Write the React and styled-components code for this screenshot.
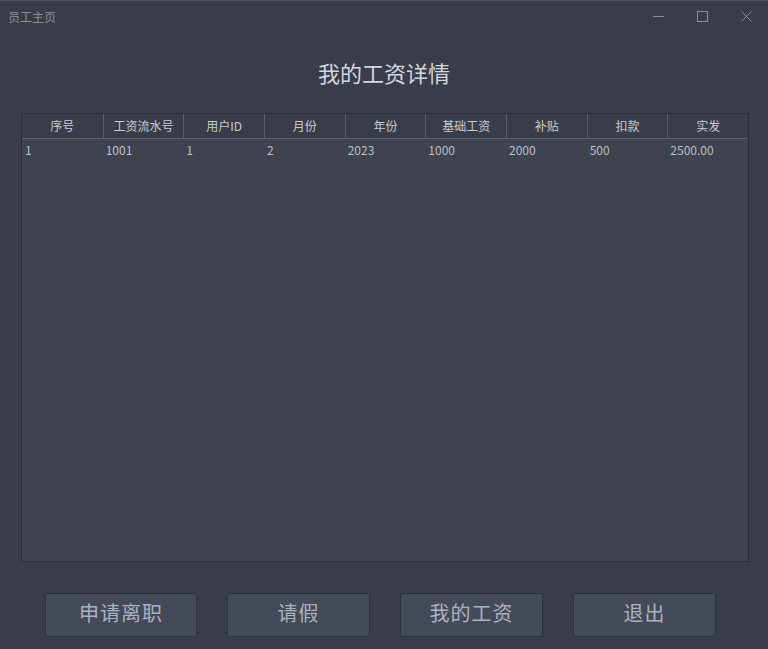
import React from "react";
import styled, { createGlobalStyle } from "styled-components";

const Global = createGlobalStyle`
  html, body { margin: 0; padding: 0; background: #393c4a; }
  body { font-family: "Noto Sans CJK SC", "Noto Sans", sans-serif; }
  * { box-sizing: border-box; }
`;

const Window = styled.div`
  width: 768px;
  height: 649px;
  background: #393c4a;
  border-top: 1px solid #4b4e59;
  display: flex;
  flex-direction: column;
  overflow: hidden;
`;

const TitleBar = styled.div`
  height: 31px;
  display: flex;
  align-items: center;
  justify-content: space-between;
`;

const TitleText = styled.div`
  padding-left: 8px;
  font-size: 12px;
  color: #8d8f96;
  line-height: 16px;
`;

const Controls = styled.div`
  display: flex;
  height: 100%;
`;

const Ctrl = styled.div`
  width: 44px;
  height: 100%;
  display: flex;
  align-items: center;
  justify-content: center;
  padding-bottom: 1px;
`;

const Heading = styled.h1`
  margin: 0;
  height: 81px;
  padding-top: 27px;
  font-size: 22px;
  line-height: 26px;
  font-weight: normal;
  text-align: center;
  color: #d2d6de;
`;

const TableBox = styled.div`
  margin: 0 19px 0 21px;
  height: 449px;
  border: 1px solid #2b2e39;
  background: #3f4350;
  display: flex;
  flex-direction: column;
`;

const Row = styled.div`
  display: grid;
  grid-template-columns: repeat(9, 1fr);
  height: ${(p) => p.$h}px;
  background: ${(p) => (p.$head ? "#393c49" : "transparent")};
  border-bottom: ${(p) => (p.$head ? "1px solid #5d616b" : "none")};
`;

const HeadCell = styled.div`
  font-size: 12px;
  color: #c9ccd2;
  display: flex;
  align-items: center;
  justify-content: center;
  padding-bottom: 1px;
  border-left: ${(p) => (p.$first ? "none" : "1px solid #5a5e69")};
`;

const Cell = styled.div`
  font-size: 12px;
  color: #b9c0cb;
  display: flex;
  align-items: center;
  padding-left: 3px;
`;

const ButtonRow = styled.div`
  display: flex;
  padding: 31px 0 0 45px;
  gap: 30px;
`;

const Btn = styled.button`
  width: ${(p) => p.$w}px;
  height: 44px;
  background: #454a58;
  border: 1px solid #2e3140;
  border-radius: 2px;
  color: #a9b2c2;
  font-family: "Noto Sans CJK SC", "Noto Sans", sans-serif;
  font-size: 20px;
  line-height: 24px;
  letter-spacing: 1px;
  padding: 0 0 5px 0;
  cursor: pointer;
`;

const headers = ["序号", "工资流水号", "用户ID", "月份", "年份", "基础工资", "补贴", "扣款", "实发"];
const rows = [["1", "1001", "1", "2", "2023", "1000", "2000", "500", "2500.00"]];

export default function App() {
  return (
    <>
      <Global />
      <Window>
        <TitleBar>
          <TitleText>员工主页</TitleText>
          <Controls>
            <Ctrl>
              <svg width="11" height="11" viewBox="0 0 11 11">
                <line x1="0" y1="5.5" x2="11" y2="5.5" stroke="#8d8f96" strokeWidth="1" />
              </svg>
            </Ctrl>
            <Ctrl>
              <svg width="11" height="11" viewBox="0 0 11 11">
                <rect x="0.5" y="0.5" width="10" height="10" fill="none" stroke="#8d8f96" strokeWidth="1" />
              </svg>
            </Ctrl>
            <Ctrl>
              <svg width="11" height="11" viewBox="0 0 11 11">
                <path d="M0.5 0.5 L10.5 10.5 M10.5 0.5 L0.5 10.5" stroke="#8d8f96" strokeWidth="1" />
              </svg>
            </Ctrl>
          </Controls>
        </TitleBar>
        <Heading>我的工资详情</Heading>
        <TableBox>
          <Row $head $h={25}>
            {headers.map((h, i) => (
              <HeadCell key={h} $first={i === 0}>{h}</HeadCell>
            ))}
          </Row>
          {rows.map((r, i) => (
            <Row key={i} $h={20}>
              {r.map((c, j) => (
                <Cell key={j}>{c}</Cell>
              ))}
            </Row>
          ))}
        </TableBox>
        <ButtonRow>
          <Btn $w={152}>申请离职</Btn>
          <Btn $w={143}>请假</Btn>
          <Btn $w={143}>我的工资</Btn>
          <Btn $w={143}>退出</Btn>
        </ButtonRow>
      </Window>
    </>
  );
}
